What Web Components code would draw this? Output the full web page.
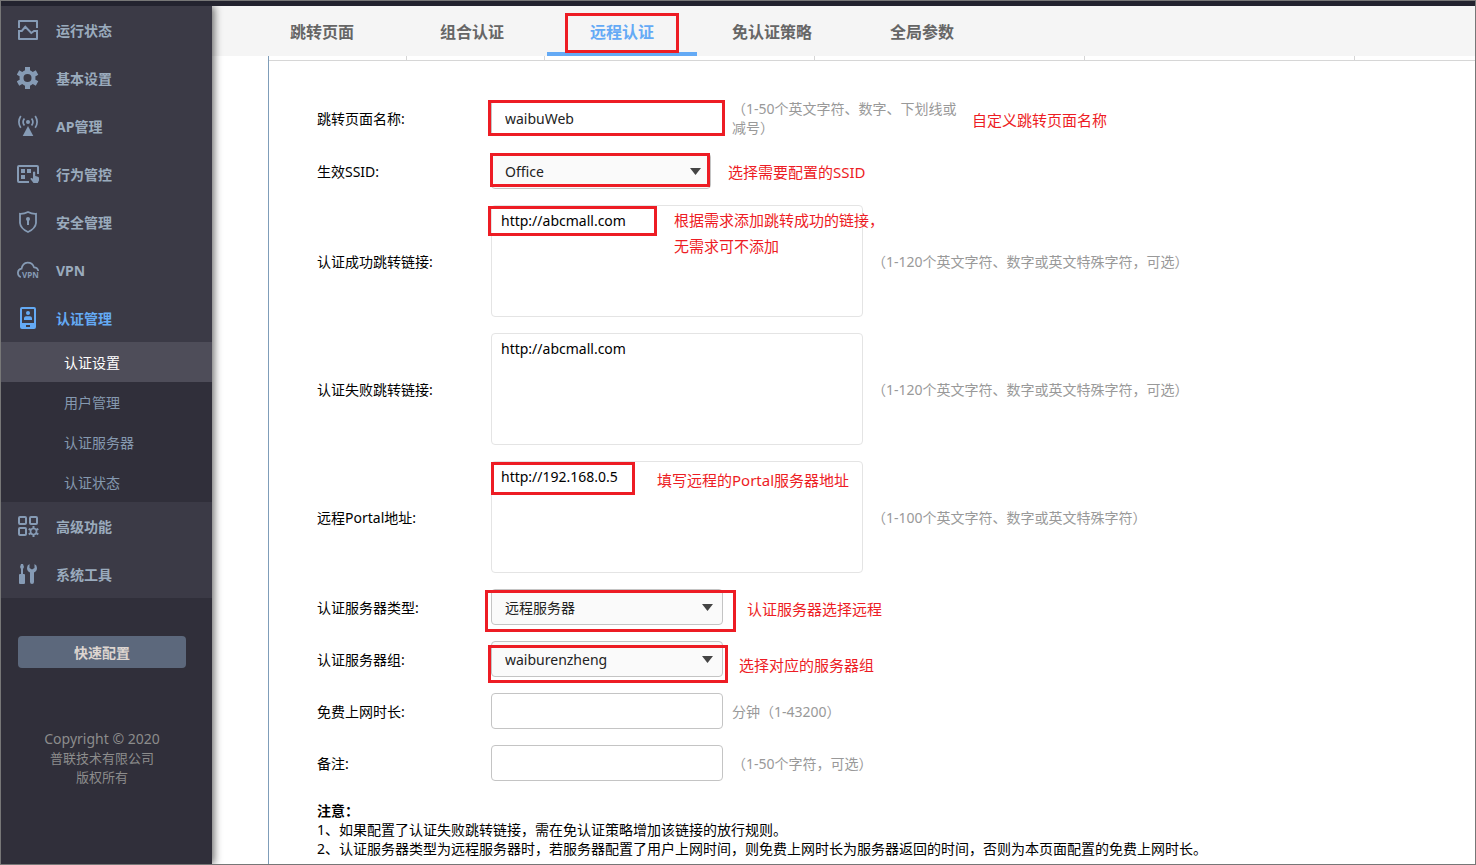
<!DOCTYPE html>
<html lang="zh-CN">
<head>
<meta charset="UTF-8">
<title>认证设置</title>
<style>
  body {
    margin: 0;
    font: 14px/19px "Noto Sans", "Noto Sans CJK SC", sans-serif;
    color: #000;
    background: #fff;
  }
</style>
</head>
<body>
<app-shell>
  <side-nav slot="nav">
    <nav-item icon="status">运行状态</nav-item>
    <nav-item icon="gear">基本设置</nav-item>
    <nav-item icon="ap">AP管理</nav-item>
    <nav-item icon="behavior">行为管控</nav-item>
    <nav-item icon="shield">安全管理</nav-item>
    <nav-item icon="vpn">VPN</nav-item>
    <nav-item icon="auth" active>认证管理</nav-item>
    <sub-item active>认证设置</sub-item>
    <sub-item>用户管理</sub-item>
    <sub-item>认证服务器</sub-item>
    <sub-item>认证状态</sub-item>
    <nav-item icon="advanced">高级功能</nav-item>
    <nav-item icon="tools">系统工具</nav-item>
  </side-nav>

  <tab-bar slot="tabs">
    <tab-item>跳转页面</tab-item>
    <tab-item>组合认证</tab-item>
    <tab-item active>远程认证<mark-box slot="marks" style="--x:18px;--y:7px;--w:114px;--h:40px"></mark-box></tab-item>
    <tab-item>免认证策略</tab-item>
    <tab-item>全局参数</tab-item>
  </tab-bar>

  <portal-form>
    <form-field label="跳转页面名称:" type="text" value="waibuWeb">
      <span slot="hint">（1-50个英文字符、数字、下划线或减号）</span>
      <mark-box slot="marks" style="--x:171px;--y:1px;--w:237px;--h:36px"></mark-box>
      <mark-note slot="marks" style="--x:655px;--y:8px">自定义跳转页面名称</mark-note>
    </form-field>
    <form-field label="生效SSID:" type="select" value="Office" narrow>
      <mark-box slot="marks" style="--x:173px;--y:0px;--w:220px;--h:34px"></mark-box>
      <mark-note slot="marks" style="--x:411px;--y:6px">选择需要配置的SSID</mark-note>
    </form-field>
    <form-field label="认证成功跳转链接:" type="textarea" value="http://abcmall.com">
      <span slot="hint">（1-120个英文字符、数字或英文特殊字符，可选）</span>
      <mark-box slot="marks" style="--x:171px;--y:1px;--w:169px;--h:30px"></mark-box>
      <mark-note slot="marks" style="--x:357px;--y:2px">根据需求添加跳转成功的链接，<br>无需求可不添加</mark-note>
    </form-field>
    <form-field label="认证失败跳转链接:" type="textarea" value="http://abcmall.com">
      <span slot="hint">（1-120个英文字符、数字或英文特殊字符，可选）</span>
    </form-field>
    <form-field label="远程Portal地址:" type="textarea" value="http://192.168.0.5">
      <span slot="hint">（1-100个英文字符、数字或英文特殊字符）</span>
      <mark-box slot="marks" style="--x:174px;--y:1px;--w:144px;--h:33px"></mark-box>
      <mark-note slot="marks" style="--x:340px;--y:6px">填写远程的Portal服务器地址</mark-note>
    </form-field>
    <form-field label="认证服务器类型:" type="select" value="远程服务器">
      <mark-box slot="marks" style="--x:168px;--y:1px;--w:251px;--h:42px"></mark-box>
      <mark-note slot="marks" style="--x:430px;--y:7px">认证服务器选择远程</mark-note>
    </form-field>
    <form-field label="认证服务器组:" type="select" value="waiburenzheng">
      <mark-box slot="marks" style="--x:171px;--y:4px;--w:240px;--h:38px"></mark-box>
      <mark-note slot="marks" style="--x:422px;--y:11px">选择对应的服务器组</mark-note>
    </form-field>
    <form-field label="免费上网时长:" type="text" value="">
      <span slot="hint">分钟（1-43200）</span>
    </form-field>
    <form-field label="备注:" type="text" value="">
      <span slot="hint">（1-50个字符，可选）</span>
    </form-field>
    <div slot="notes">
      <b>注意：</b><br>
      1、如果配置了认证失败跳转链接，需在免认证策略增加该链接的放行规则。<br>
      2、认证服务器类型为远程服务器时，若服务器配置了用户上网时间，则免费上网时长为服务器返回的时间，否则为本页面配置的免费上网时长。
    </div>
  </portal-form>
</app-shell>

<script>
// Sidebar icons, all on a 22x22 grid
const ICONS = {
  status: `
    <path d="M2 9V2H20V9M2 11.5V20H20V11.5" fill="none" stroke="currentColor" stroke-width="2" stroke-linejoin="round"/>
    <path d="M1 12H4.8L8.3 7.8L14.3 14L17 12H21" fill="none" stroke="currentColor" stroke-width="2"/>`,
  gear: `
    <circle cx="10.5" cy="11" r="6" fill="none" stroke="currentColor" stroke-width="4"/>
    <g stroke="currentColor" stroke-width="5">
      <path d="M10.5 0V5M10.5 17V22"/>
      <path d="M10.5 0V5M10.5 17V22" transform="rotate(60 10.5 11)"/>
      <path d="M10.5 0V5M10.5 17V22" transform="rotate(120 10.5 11)"/>
    </g>`,
  ap: `
    <circle cx="11" cy="7" r="2" fill="currentColor"/>
    <path d="M11 11L16.3 21H5.7Z" fill="currentColor"/>
    <path d="M7.4 3.5Q4.8 7 7.4 10.5M14.6 3.5Q17.2 7 14.6 10.5M3.8 1Q0 7 3.8 12.8M18.2 1Q22 7 18.2 12.8" fill="none" stroke="currentColor" stroke-width="1.7"/>`,
  behavior: `
    <path d="M12 19H2Q1 19 1 18V4Q1 3 2 3H20Q21 3 21 4V11" fill="none" stroke="currentColor" stroke-width="2"/>
    <path d="M4 6H8V10H4ZM10 6H14V10H10ZM4 12H8V16H4Z" fill="currentColor"/>
    <path d="M16 9Q17.2 8 18.2 9V13L21 13.8Q22 14.2 22 15.2V17.5L20.8 20H16.5L13.4 16Q13.6 14.6 15 15L16 16Z" fill="currentColor"/>`,
  shield: `
    <path d="M11 1Q15 3 19 2.8V12Q18.5 17.5 11 21Q3.5 17.5 3 12V2.8Q7 3 11 1Z" fill="none" stroke="currentColor" stroke-width="1.8"/>
    <circle cx="11" cy="8" r="2" fill="currentColor"/>
    <path d="M11 8V14" stroke="currentColor" stroke-width="2"/>`,
  vpn: `
    <path d="M3.8 18.2Q.8 17 .9 13.6Q1.2 10.2 4.6 9.7Q5.5 4 10.5 3.6Q15.5 3.5 17 8.3Q20.8 8.6 21.3 12" fill="none" stroke="currentColor" stroke-width="1.7"/>
    <text x="5" y="19" font-size="8" font-weight="700" fill="currentColor">VPN</text>`,
  auth: `
    <path d="M5 0H17Q19 0 19 2V20Q19 22 17 22H5Q3 22 3 20V2Q3 0 5 0ZM5 2V16H17V2ZM9 18V20H13V18Z" fill="currentColor" fill-rule="evenodd"/>
    <circle cx="11" cy="6" r="2" fill="currentColor"/>
    <path d="M7 13V11Q7.3 9.5 9 9.3H13Q14.7 9.5 15 11V13Z" fill="currentColor"/>`,
  advanced: `
    <g fill="none" stroke="currentColor" stroke-width="2">
      <rect x="2" y="2" width="7" height="7" rx="1"/>
      <rect x="13" y="2" width="7" height="7" rx="1"/>
      <rect x="2" y="13" width="7" height="7" rx="1"/>
      <circle cx="16.5" cy="16.5" r="3" stroke-width="1.7"/>
      <path d="M16.5 11V13.5M16.5 19.5V22M11.7 13.8L14 15M19 18L21.3 19.3M21.3 13.8L19 15M14 18L11.7 19.3"/>
    </g>`,
  tools: `
    <path d="M4 1H6L7 4L6 6V11H7Q8 11 8 12V20Q8 21 7 21H3Q2 21 2 20V12Q2 11 3 11H4V6L3 4Z" fill="currentColor"/>
    <path d="M12.5 1V5L15 6.5L17.5 5V1Q20 2.2 20 5Q20 8 17 9.5V19Q17 21 15 21Q13 21 13 19V9.5Q10 8 10 5Q10 2.2 12.5 1Z" fill="currentColor"/>`
};

class AppShell extends HTMLElement {
  connectedCallback() {
    this.attachShadow({ mode: 'open' });
    this.shadowRoot.innerHTML = `
      <style>
        :host {
          display: flex;
          flex-direction: column;
          box-sizing: border-box;
          min-height: 100vh;
          border: 1px solid #777;
        }
        .strip { height: 5px; background: #23232f; }
        .body { display: flex; flex: 1; }
        main { flex: 1; min-width: 0; display: flex; flex-direction: column; }
      </style>
      <div class="strip"></div>
      <div class="body">
        <slot name="nav"></slot>
        <main><slot name="tabs"></slot><slot></slot></main>
      </div>
    `;
  }
}

class SideNav extends HTMLElement {
  connectedCallback() {
    this.attachShadow({ mode: 'open' });
    this.shadowRoot.innerHTML = `
      <style>
        :host {
          display: block;
          position: relative;
          z-index: 1;
          flex: 0 0 211px;
          background: #302f3a;
          box-shadow: 2px 0 8px rgba(0, 0, 0, .6);
          clip-path: inset(0 -12px 0 0);
        }
        .foot { padding: 38px 26px 0 17px; text-align: center; }
        button {
          width: 100%;
          height: 32px;
          border: 0;
          border-radius: 4px;
          background: #5c687c;
          color: #ddd5d0;
          font: inherit;
          font-weight: 700;
        }
        p { margin: 61px 0 0; color: #8c8c8c; font-size: 13px; }
        span { font-size: 14px; }
      </style>
      <nav><slot></slot></nav>
      <div class="foot">
        <button type="button">快速配置</button>
        <p><span>Copyright © 2020</span><br>普联技术有限公司<br>版权所有</p>
      </div>
    `;
  }
}

class NavItem extends HTMLElement {
  connectedCallback() {
    this.attachShadow({ mode: 'open' });
    this.shadowRoot.innerHTML = `
      <style>
        :host { display: block; background: #3b3a46; color: #9aabbd; --icon: #869bb5; }
        :host([active]) { color: #64aaf5; --icon: #64aaf5; }
        a {
          display: flex;
          align-items: center;
          gap: 17px;
          height: 48px;
          padding-left: 16px;
          color: inherit;
          font-weight: 700;
          text-decoration: none;
        }
        svg { width: 22px; height: 22px; color: var(--icon); }
      </style>
      <a href="#"><svg viewBox="0 0 22 22" aria-hidden="true">${ICONS[this.getAttribute('icon')]}</svg><slot></slot></a>
    `;
  }
}

class SubItem extends HTMLElement {
  connectedCallback() {
    this.attachShadow({ mode: 'open' });
    this.shadowRoot.innerHTML = `
      <style>
        :host { display: block; color: #8599b0; }
        :host([active]) { background: #4e4d59; color: #fff; }
        a {
          display: block;
          height: 40px;
          padding-left: 63px;
          line-height: 42px;
          color: inherit;
          text-decoration: none;
        }
      </style>
      <a href="#"><slot></slot></a>
    `;
  }
}

class TabBar extends HTMLElement {
  connectedCallback() {
    this.attachShadow({ mode: 'open' });
    this.shadowRoot.innerHTML = `
      <style>
        :host { display: block; background: #f5f5f5; }
        nav { display: flex; height: 50px; padding-left: 35px; }
      </style>
      <nav><slot></slot></nav>
    `;
  }
}

class TabItem extends HTMLElement {
  connectedCallback() {
    this.attachShadow({ mode: 'open' });
    this.shadowRoot.innerHTML = `
      <style>
        :host { display: block; position: relative; width: 150px; color: #666; }
        a {
          display: block;
          box-sizing: border-box;
          height: 50px;
          border-bottom: 4px solid transparent;
          font-size: 16px;
          font-weight: 700;
          line-height: 52px;
          text-align: center;
          text-decoration: none;
          color: inherit;
        }
        :host([active]) { color: #64aaf5; }
        :host([active]) a { border-color: #64aaf5; }
      </style>
      <a href="#"><slot></slot></a>
      <slot name="marks"></slot>
    `;
  }
}

class PortalForm extends HTMLElement {
  connectedCallback() {
    this.attachShadow({ mode: 'open' });
    this.shadowRoot.innerHTML = `
      <style>
        :host { display: block; flex: 1; margin-left: 56px; border-left: 1px solid #7f9db9; }
        /* last row of the list, partly scrolled under the tabs */
        .grid {
          display: grid;
          grid-template-columns: 138px 138px 270px 270px 270px 1fr;
          height: 4px;
          border-bottom: 1px solid #d6d6d6;
        }
        .grid i { border-right: 1px solid #d6d6d6; }
        .grid i:last-child { border: 0; }
        form { display: flex; flex-direction: column; gap: 16px; padding: 38px 0 0 48px; }
        .notes { padding: 4px 0; }
      </style>
      <div class="grid"><i></i><i></i><i></i><i></i><i></i><i></i></div>
      <form>
        <slot></slot>
        <div class="notes"><slot name="notes"></slot></div>
      </form>
    `;
  }
}

class FormField extends HTMLElement {
  control(type, value) {
    if (type === 'textarea') return `<textarea id="c">${value}</textarea>`;
    if (type === 'select') {
      return `
        <div class="select">
          <select id="c"><option>${value}</option></select>
          <svg viewBox="0 0 11 7" aria-hidden="true"><path d="M0 0H11L5.5 7Z" fill="#444"/></svg>
        </div>`;
    }
    return `<input id="c" type="text" value="${value}">`;
  }

  connectedCallback() {
    this.attachShadow({ mode: 'open' });
    this.shadowRoot.innerHTML = `
      <style>
        :host { display: flex; align-items: center; position: relative; }
        label { flex: 0 0 174px; }
        input, select, textarea {
          display: block;
          box-sizing: border-box;
          width: 232px;
          height: 36px;
          margin: 0;
          padding: 0 13px;
          border: 1px solid #c4c4c4;
          border-radius: 4px;
          background: #fff;
          color: #222;
          font: inherit;
        }
        select { appearance: none; background: #fafafa; }
        :host([narrow]) select { width: 220px; }
        textarea {
          width: 372px;
          height: 112px;
          padding: 5px 9px;
          border-color: #e4e4e4;
          resize: none;
          line-height: 20px;
          color: #000;
        }
        .select { position: relative; }
        svg { position: absolute; right: 10px; top: 15px; width: 11px; height: 7px; pointer-events: none; }
        .hint { max-width: 232px; margin-left: 9px; color: #999; text-spacing-trim: space-all; }
        :host([type="textarea"]) .hint { max-width: none; }
      </style>
      <label for="c">${this.getAttribute('label')}</label>
      ${this.control(this.getAttribute('type'), this.getAttribute('value'))}
      <div class="hint"><slot name="hint"></slot></div>
      <slot name="marks"></slot>
    `;
  }
}

// Red frame laid over a control
class MarkBox extends HTMLElement {
  connectedCallback() {
    this.attachShadow({ mode: 'open' });
    this.shadowRoot.innerHTML = `
      <style>
        :host {
          position: absolute;
          left: var(--x);
          top: var(--y);
          box-sizing: border-box;
          width: var(--w);
          height: var(--h);
          border: 3px solid #ed1c24;
          pointer-events: none;
        }
      </style>
    `;
  }
}

// Red remark beside a frame
class MarkNote extends HTMLElement {
  connectedCallback() {
    this.attachShadow({ mode: 'open' });
    this.shadowRoot.innerHTML = `
      <style>
        :host {
          position: absolute;
          left: var(--x);
          top: var(--y);
          color: #ed1c24;
          font-size: 15px;
          line-height: 26px;
          white-space: nowrap;
        }
      </style>
      <slot></slot>
    `;
  }
}

customElements.define('app-shell', AppShell);
customElements.define('side-nav', SideNav);
customElements.define('nav-item', NavItem);
customElements.define('sub-item', SubItem);
customElements.define('tab-bar', TabBar);
customElements.define('tab-item', TabItem);
customElements.define('portal-form', PortalForm);
customElements.define('form-field', FormField);
customElements.define('mark-box', MarkBox);
customElements.define('mark-note', MarkNote);
</script>
</body>
</html>
